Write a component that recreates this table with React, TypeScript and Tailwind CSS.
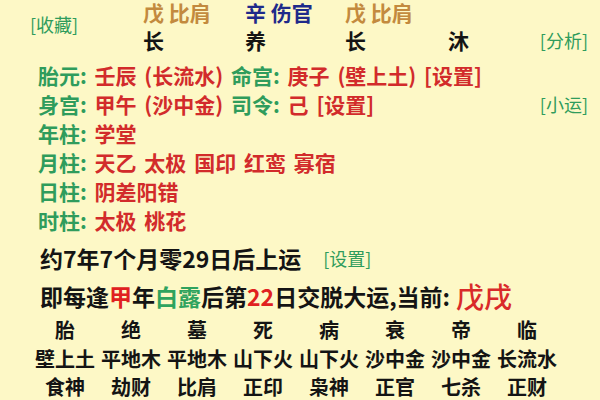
import React from 'react'

const font = { fontFamily: '"Noto Sans CJK SC", "Noto Sans", sans-serif' }

const topLabels = [
  { text: '戊 比肩', color: 'text-[#c38a3e]' },
  { text: '辛 伤官', color: 'text-[#1f2a8a]' },
  { text: '戊 比肩', color: 'text-[#c38a3e]' },
  { text: '\u00a0', color: '' },
]
const topStages = ['长', '养', '长', '沐']

const shensha = [
  { label: '年柱', value: '学堂' },
  { label: '月柱', value: '天乙 太极 国印 红鸾 寡宿' },
  { label: '日柱', value: '阴差阳错' },
  { label: '时柱', value: '太极 桃花' },
]

const stages = ['胎', '绝', '墓', '死', '病', '衰', '帝', '临']
const nayin = ['壁上土', '平地木', '平地木', '山下火', '山下火', '沙中金', '沙中金', '长流水']
const gods = ['食神', '劫财', '比肩', '正印', '枭神', '正官', '七杀', '正财']

export default function App() {
  return (
    <div className="w-[600px] h-[400px] overflow-hidden bg-[#fdf8c6] text-[#141414] font-semibold" style={font}>
      {/* 顶部 */}
      <div className="flex h-[56px] pr-[12px]">
        <div className="w-[143px] pl-[30px] pt-[12px] text-[18px] leading-[24px] font-normal text-[#2f9c5c]">[收藏]</div>
        <div className="flex-1 grid grid-cols-[102px_100px_103px_1fr]">
          {topLabels.map((t, i) => (
            <div key={i} className="flex flex-col text-[21px] leading-[24px]">
              <span className={t.color}>{t.text}</span>
              <span className="mt-[4px]">{topStages[i]}</span>
            </div>
          ))}
        </div>
        <div className="pt-[28px] text-[18px] leading-[24px] font-normal text-[#2f9c5c]">[分析]</div>
      </div>

      {/* 胎元 / 身宫 / 神煞 */}
      <div className="pl-[38px] pr-[12px] pt-[5px] text-[21px] leading-[29px] [word-spacing:3px]">
        <div className="text-[#d22b2b]">
          <span className="text-[#2f9c5c]">胎元: </span>壬辰 (长流水) <span className="text-[#2f9c5c]">命宫: </span>庚子 (壁上土) [设置]
        </div>
        <div className="flex justify-between">
          <div className="text-[#d22b2b]">
            <span className="text-[#2f9c5c]">身宫: </span>甲午 (沙中金) <span className="text-[#2f9c5c]">司令: </span>己 [设置]
          </div>
          <span className="text-[18px] font-normal text-[#2f9c5c]">[小运]</span>
        </div>
        {shensha.map((s) => (
          <div key={s.label} className="text-[#d22b2b]">
            <span className="text-[#2f9c5c]">{s.label}: </span>
            {s.value}
          </div>
        ))}
      </div>

      {/* 上运 */}
      <div className="pl-[40px] pt-[5px] text-[23px]">
        <div className="flex items-center h-[36px]">
          约7年7个月零29日后上运
          <span className="ml-[22px] text-[18px] font-normal text-[#2f9c5c]">[设置]</span>
        </div>
        <div className="flex items-center h-[40px]">
          即每逢<span className="text-[#e02020]">甲</span>年<span className="text-[#2fa35e]">白露</span>后第
          <span className="text-[#e02020]">22</span>日交脱大运,当前:
          <span className="ml-[6px] text-[28px] font-medium text-[#d92a2a]">戊戌</span>
        </div>
      </div>

      {/* 十二长生 */}
      <div className="grid grid-cols-8 w-[528px] ml-[32px] text-[20px] leading-[28.5px] text-center">
        {stages.map((s, i) => (
          <div key={'s' + i}>{s}</div>
        ))}
        {nayin.map((s, i) => (
          <div key={'n' + i} className="whitespace-nowrap">{s}</div>
        ))}
        {gods.map((s, i) => (
          <div key={'g' + i}>{s}</div>
        ))}
      </div>
    </div>
  )
}
